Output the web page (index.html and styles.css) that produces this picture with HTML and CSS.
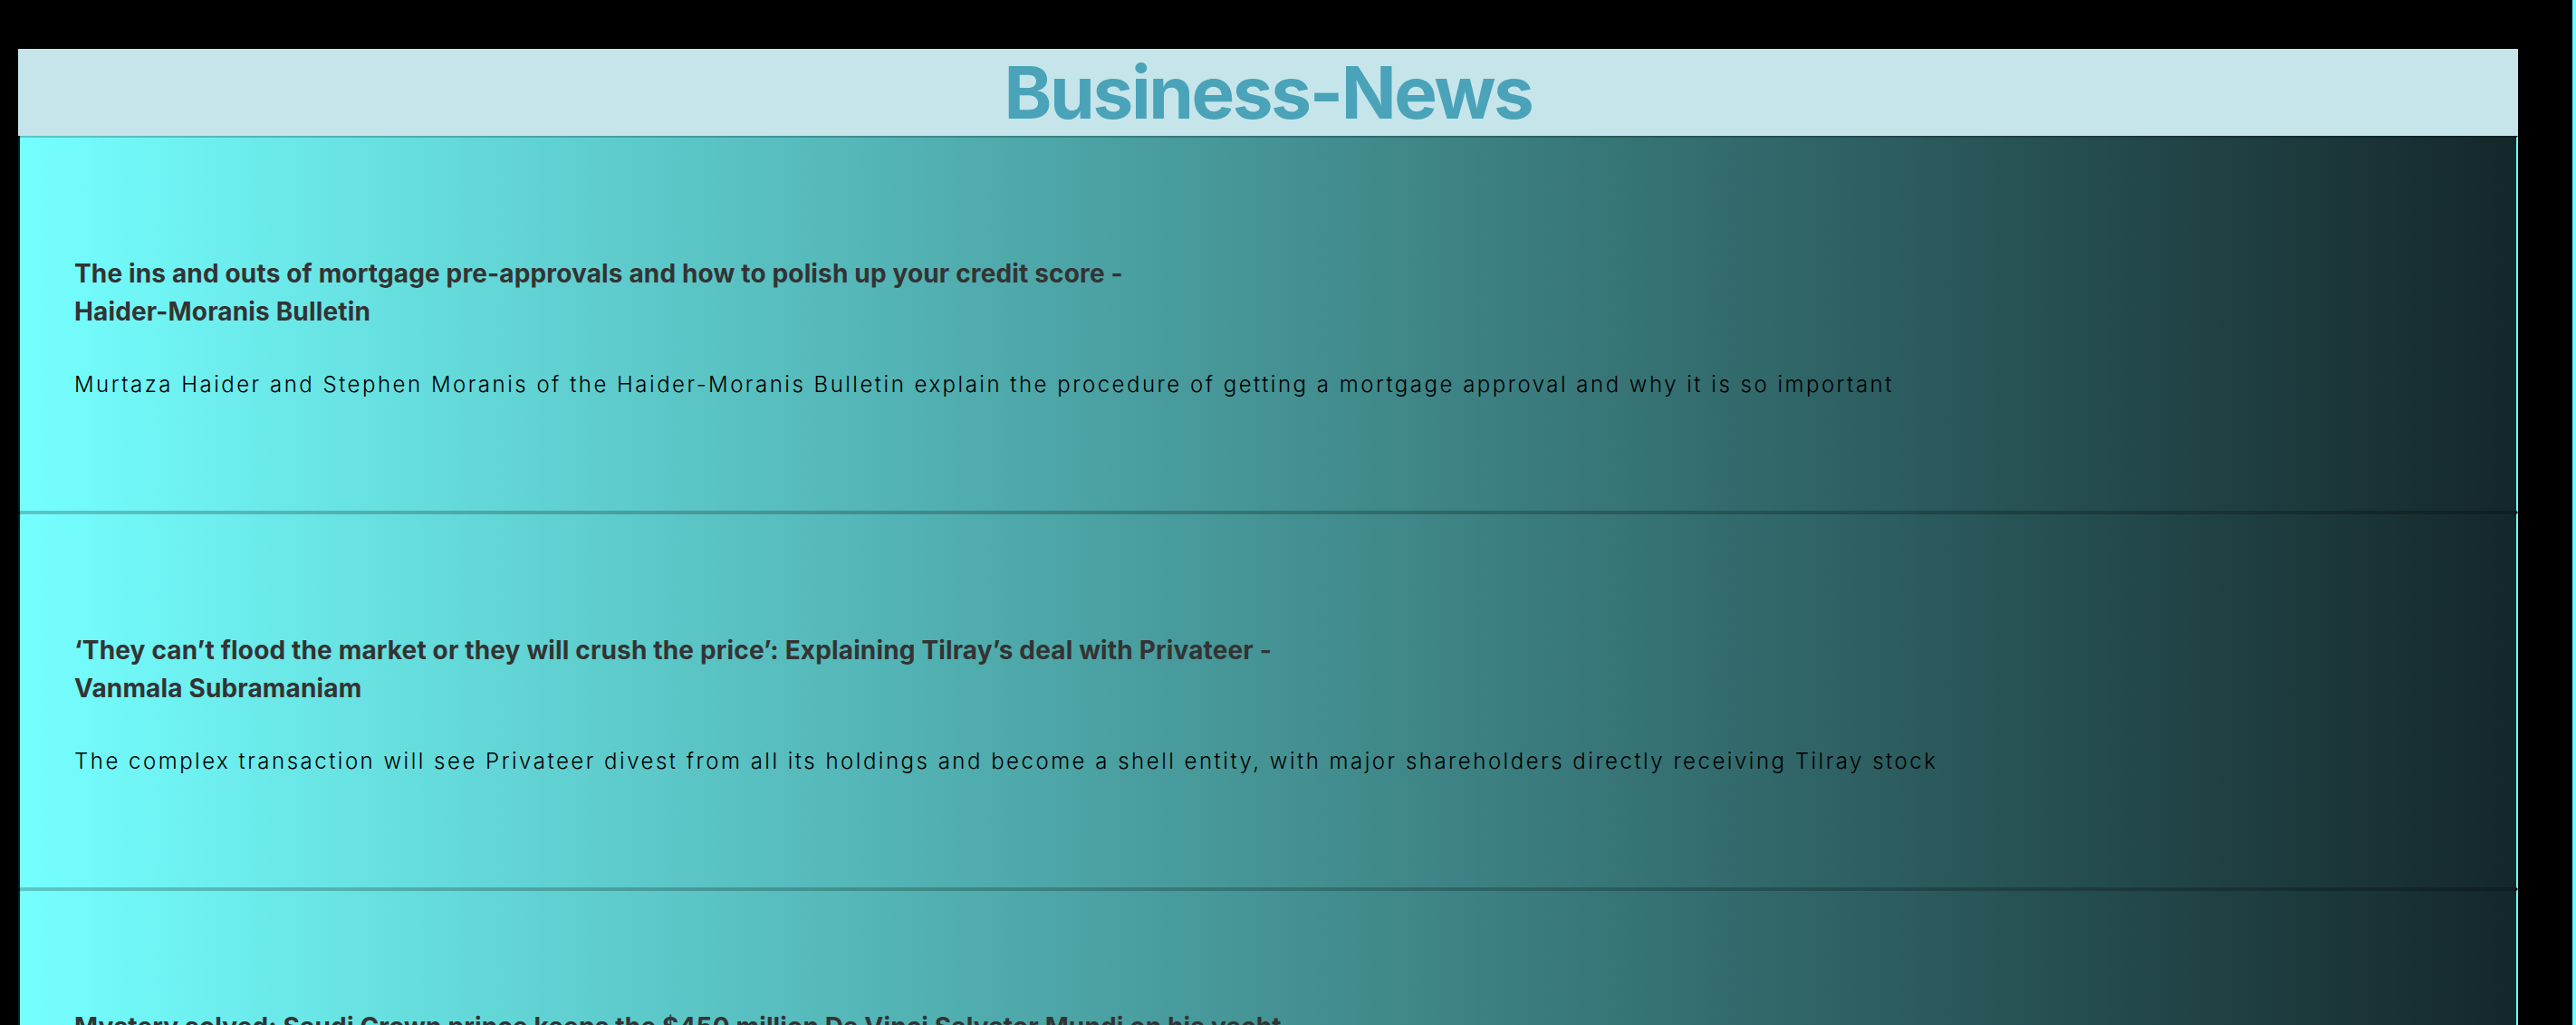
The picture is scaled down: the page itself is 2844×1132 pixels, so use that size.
FILE: index.html
```html
<!DOCTYPE html>
<html lang="en">
<head>
<meta charset="utf-8">
<title>Business-News</title>
<link rel="stylesheet" href="styles.css">
</head>
<body>
<main class="page">
  <header class="masthead">
    <h1 class="masthead-title">Business-News</h1>
  </header>
  <section class="feed">
    <article class="card">
      <h3 class="card-title">The ins and outs of mortgage pre-approvals and how to polish up your credit score -<br>Haider-Moranis Bulletin</h3>
      <p class="card-text">Murtaza Haider and Stephen Moranis of the Haider-Moranis Bulletin explain the procedure of getting a mortgage approval and why it is so important</p>
    </article>
    <article class="card">
      <h3 class="card-title">‘They can’t flood the market or they will crush the price’: Explaining Tilray’s deal with Privateer -<br>Vanmala Subramaniam</h3>
      <p class="card-text">The complex transaction will see Privateer divest from all its holdings and become a shell entity, with major shareholders directly receiving Tilray stock</p>
    </article>
    <article class="card">
      <h3 class="card-title">Mystery solved: Saudi Crown prince keeps the $450 million Da Vinci Salvator Mundi on his yacht -<br>Bloomberg News</h3>
      <p class="card-text">The painting was whisked away in the middle of the night on Mohammed bin Salman’s plane and relocated to his yacht, the Serene</p>
    </article>
  </section>
</main>
</body>
</html>
```

FILE: styles.css
```css
html, body {
  margin: 0;
  padding: 0;
}

body {
  background: #000;
  border-right: 4px solid #6ffcfc;
  min-height: 100vh;
  font-family: Inter, "Noto Sans", "Liberation Sans", sans-serif;
}

.page {
  margin: 0 60px 0 20px;
  padding-top: 54px;
}

.masthead {
  background: #c5e5ea;
}

.masthead-title {
  margin: 0;
  text-align: center;
  font-size: 80px;
  font-weight: 700;
  line-height: 96px;
  color: #4aa3b8;
  letter-spacing: -2.4px;
}

.feed {
  display: flex;
  flex-direction: column;
}

.card {
  height: 416px;
  box-sizing: border-box;
  padding: 129px 58px 0 60px;
  background: linear-gradient(to right, #75ffff 0%, #14272a 100%);
  border-top: 2px solid rgba(0, 0, 0, 0.22);
  border-bottom: 2px solid rgba(0, 0, 0, 0.22);
  border-left: 2px solid #0b1f20;
  border-right: 2px solid #6ffcfc;
  border-top-left-radius: 3px;
}

.card-title {
  margin: 0;
  font-size: 28px;
  line-height: 42px;
  font-weight: 700;
  color: #333;
  letter-spacing: 0.15px;
}

.card-text {
  margin: 42px 0 0 0;
  font-size: 24px;
  line-height: 36px;
  font-weight: 300;
  color: #000;
  letter-spacing: 2.5px;
}
```
